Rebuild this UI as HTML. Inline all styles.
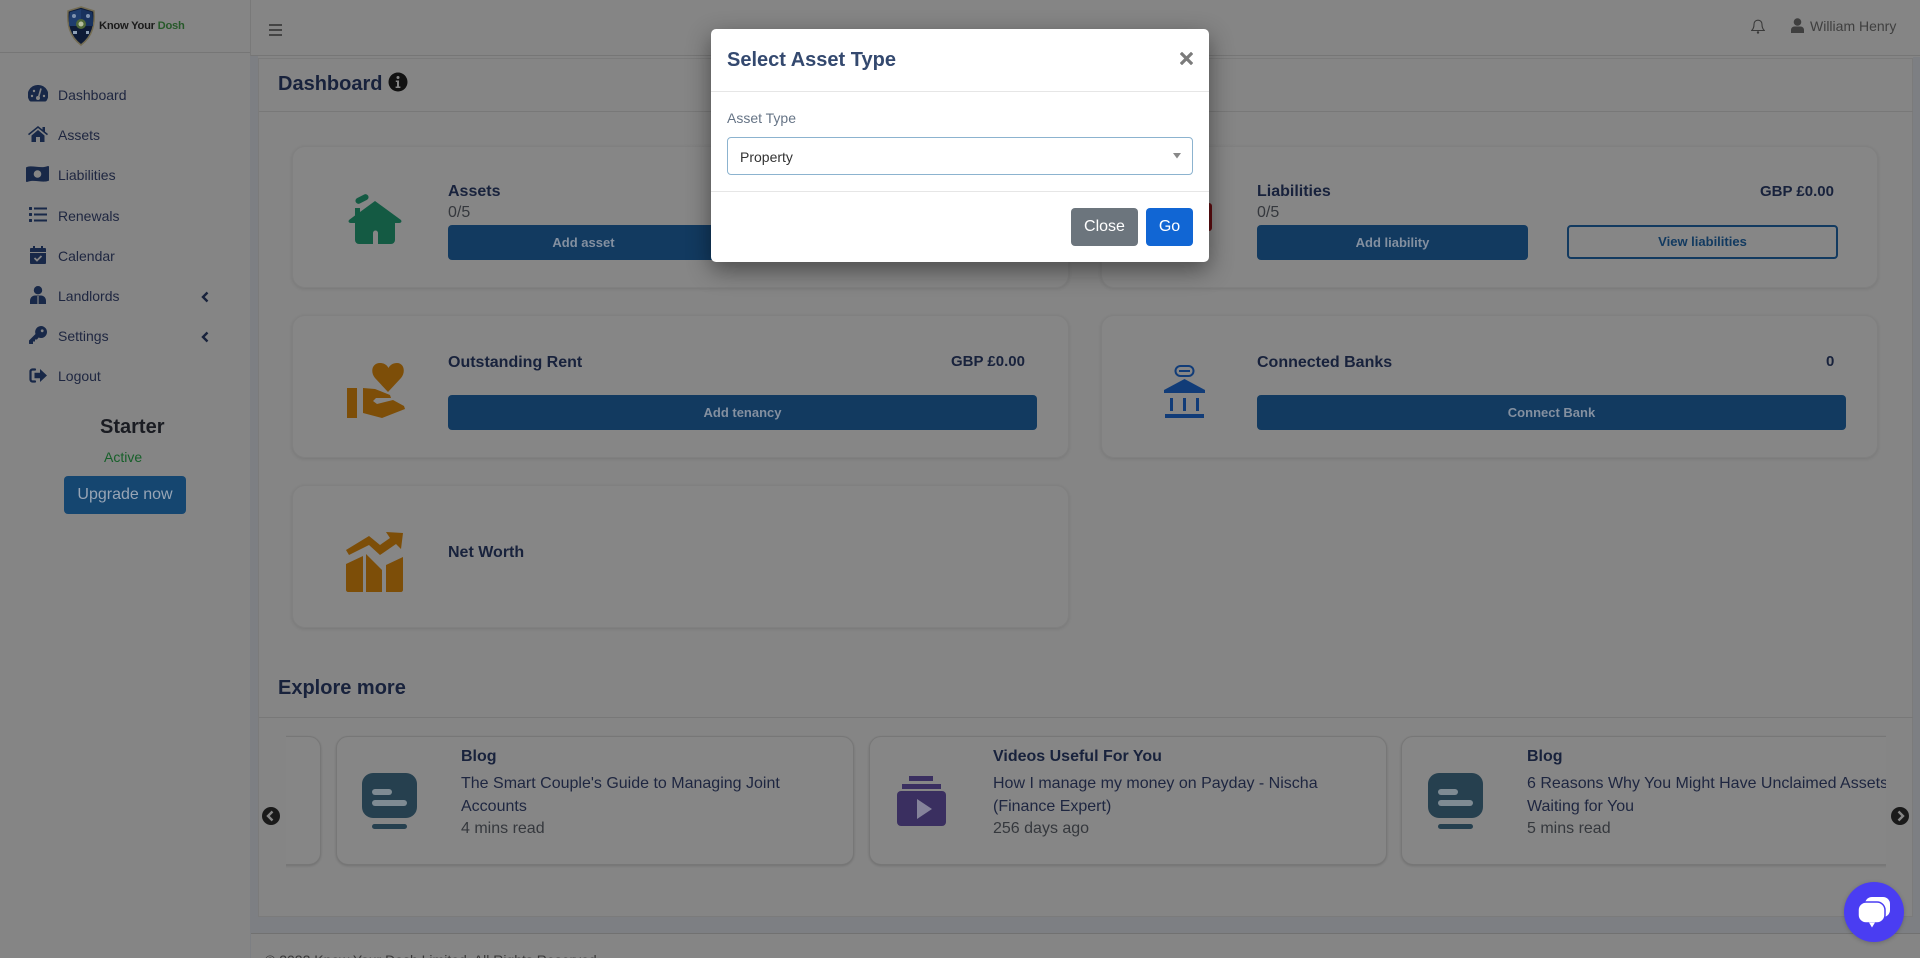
<!DOCTYPE html>
<html lang="en"><head><meta charset="utf-8"><title>Know Your Dosh</title>
<style>
*{box-sizing:border-box}
html,body{margin:0;padding:0;width:1920px;height:958px;overflow:hidden;background:#858585;font-family:"Liberation Sans",sans-serif}
#p{position:relative;width:1920px;height:958px;overflow:hidden;background:#858585}
.a{position:absolute}
.t{position:absolute;white-space:nowrap;line-height:1}
.nav{position:absolute;left:58px;font-size:14px;line-height:16px;color:#1e2640}
.ic{position:absolute}
.card{position:absolute;background:#868686;border:1px solid #808080;border-radius:13px;box-shadow:0 1px 3px rgba(0,0,0,.1)}
.h{position:absolute;font-weight:bold;font-size:16px;line-height:18px;color:#18223c;white-space:nowrap}
.g{position:absolute;font-weight:bold;font-size:15px;line-height:18px;color:#18223c;white-space:nowrap}
.s{position:absolute;font-size:16px;line-height:18px;color:#35383d;white-space:nowrap}
.btn{position:absolute;background:#123a60;border-radius:4px;height:35px;color:#8490a0;font-weight:bold;font-size:13px;line-height:35px;text-align:center}
.c{position:absolute;top:736px;height:129px;background:#868686;border:1px solid #777;border-radius:12px;box-shadow:0 1px 2px rgba(0,0,0,.15)}
.ct{position:absolute;font-size:16px;line-height:18px;color:#1e2640;white-space:nowrap}
</style></head><body><div id="p">

<!-- gutters -->
<div class="a" style="left:250px;top:0;width:8px;height:958px;background:#7d7f83"></div>
<div class="a" style="left:250px;top:0;width:1670px;height:56px;background:#858585;border-bottom:1px solid #767676"></div>
<div class="a" style="left:0;top:52px;width:250px;height:1px;background:#767676"></div>
<div class="a" style="left:250px;top:0;width:1px;height:56px;background:#797979"></div>
<div class="a" style="left:258px;top:58px;width:1655px;height:859px;background:#858585;border:1px solid #7b7b7b"></div>
<div class="a" style="left:1913px;top:57px;width:7px;height:876px;background:#7d7f83"></div>
<div class="a" style="left:258px;top:917px;width:1662px;height:16px;background:#7d7f83"></div>
<div class="a" style="left:251px;top:933px;width:1669px;height:25px;background:#858585;border-top:1px solid #717171"></div>
<div class="a" style="left:259px;top:111px;width:1654px;height:1px;background:#787878"></div>
<div class="a" style="left:259px;top:717px;width:1654px;height:1px;background:#787878"></div>

<!-- logo -->
<svg class="ic" style="left:66px;top:6px" width="30" height="40" viewBox="0 0 30 40">
<path d="M15 1 L28 5 C29 18 27 30 15 39 C3 30 1 18 2 5Z" fill="#0e1b36" stroke="#746c52" stroke-width="1.5"/>
<path d="M4 6 L15 3V20H3C3 14 3 10 4 6Z" fill="#1f3d6d"/><path d="M26 6 L15 3V20H27C27 14 27 10 26 6Z" fill="#18325d"/>
<circle cx="15" cy="18" r="5" fill="#4f6838"/><circle cx="15" cy="18" r="2.500" fill="#b5bea0"/>
<circle cx="8" cy="10" r="2" fill="#7f93ae"/><circle cx="22" cy="10" r="2" fill="#7f93ae"/><rect x="7" y="25" width="4" height="3" fill="#8d9eb3"/><rect x="20" y="25" width="3" height="3" fill="#8d9eb3"/>
</svg>
<div class="t" style="left:99px;top:19px;font-size:11.200px;font-weight:bold;letter-spacing:-.25px;color:#1a1a1a;line-height:14px">Know Your <span style="color:#27592a">Dosh</span></div>

<!-- nav icons -->
<svg class="ic" style="left:28px;top:85px" width="20" height="18" viewBox="0 0 20 18"><path d="M10 0a10 10 0 0 0-8.600 15.600c.4.600 1 .9 1.700.9h13.800c.7 0 1.300-.3 1.700-.9A10 10 0 0 0 10 0z" fill="#182848"/><path d="M10.600 12 13 3.500" stroke="#858585" stroke-width="1.600"/><circle cx="10" cy="13" r="2" fill="#858585"/><circle cx="4" cy="11" r="1.200" fill="#858585"/><circle cx="6" cy="6" r="1.200" fill="#858585"/><circle cx="16" cy="11" r="1.200" fill="#858585"/></svg>
<svg class="ic" style="left:28px;top:126px" width="20" height="16" viewBox="0 0 20 16"><path d="M10 0 L14.500 3.600V1h2.500v4.600L20 8l-1 1.200L10 2 1 9.200 0 8z" fill="#182848"/><path d="M3.500 9.500 10 4l6.500 5.500V16H12v-5H8v5H3.500z" fill="#182848"/></svg>
<svg class="ic" style="left:26px;top:165px" width="23" height="18" viewBox="0 0 23 18"><path d="M1 2C7 0 15 4 22 1c.6 0 1 .3 1 1v13c0 .6-.3 1-1 1-6 2-14-2-21 1-.6 0-1-.3-1-1V3c0-.6.4-1 1-1z" fill="#182848"/><circle cx="11.500" cy="9" r="3.800" fill="#858585"/></svg>
<svg class="ic" style="left:29px;top:207px" width="18" height="15" viewBox="0 0 18 15" fill="#182848"><rect y="0" width="3" height="3" rx=".5"/><rect y="6" width="3" height="3" rx=".5"/><rect y="12" width="3" height="3" rx=".5"/><rect x="5" y="0.500" width="13" height="2"/><rect x="5" y="6.500" width="13" height="2"/><rect x="5" y="12.500" width="13" height="2"/></svg>
<svg class="ic" style="left:30px;top:246px" width="16" height="18" viewBox="0 0 16 18"><path d="M3 0h2v2h6V0h2v2h2c.6 0 1 .4 1 1v3H0V3c0-.6.4-1 1-1h2zM0 7h16v10c0 .6-.4 1-1 1H1c-.6 0-1-.4-1-1z" fill="#182848"/><path d="M4.500 12l2.500 2.500 4.500-4.500" stroke="#858585" stroke-width="1.800" fill="none"/></svg>
<svg class="ic" style="left:30px;top:286px" width="16" height="18" viewBox="0 0 16 18"><circle cx="8" cy="4.200" r="4.200" fill="#182848"/><path d="M0 18v-3c0-3 2-5.500 5-5.500h6c3 0 5 2.500 5 5.500v3z" fill="#182848"/><path d="M8 10v8" stroke="#858585" stroke-width="1.200"/></svg>
<svg class="ic" style="left:29px;top:326px" width="18" height="18" viewBox="0 0 18 18"><path d="M12 0a6 6 0 1 1-2.400 11.500L8 13.500H6v2H4v2.500H.5a.5.500 0 0 1-.5-.5v-3l6.500-6.500A6 6 0 0 1 12 0z" fill="#182848"/><circle cx="13.200" cy="4.800" r="1.400" fill="#858585"/></svg>
<svg class="ic" style="left:29px;top:368px" width="18" height="15" viewBox="0 0 18 15"><path d="M6 1.500H3.500A2 2 0 0 0 1.500 3.500v8a2 2 0 0 0 2 2H6" fill="none" stroke="#182848" stroke-width="2.200" stroke-linecap="round"/><path d="M11 1l7 6.500L11 14v-3.800H5.500V4.800H11z" fill="#182848"/></svg>

<div class="nav" style="top:87px">Dashboard</div>
<div class="nav" style="top:127px">Assets</div>
<div class="nav" style="top:167px">Liabilities</div>
<div class="nav" style="top:208px">Renewals</div>
<div class="nav" style="top:248px">Calendar</div>
<div class="nav" style="top:288px">Landlords</div>
<div class="nav" style="top:328px">Settings</div>
<div class="nav" style="top:368px">Logout</div>
<svg class="ic" style="left:201px;top:291px" width="8" height="12" viewBox="0 0 8 12"><path d="M6.500 1.500 2 6l4.500 4.500" fill="none" stroke="#18223c" stroke-width="2.400"/></svg>
<svg class="ic" style="left:201px;top:331px" width="8" height="12" viewBox="0 0 8 12"><path d="M6.500 1.500 2 6l4.500 4.500" fill="none" stroke="#18223c" stroke-width="2.400"/></svg>

<div class="t" style="left:100px;top:417px;font-size:20px;font-weight:bold;color:#1a1c22;line-height:20px">Starter</div>
<div class="t" style="left:104px;top:449px;font-size:14px;color:#17602a;line-height:16px">Active</div>
<div class="a" style="left:64px;top:476px;width:122px;height:38px;background:#154670;border-radius:4px;color:#98a5b5;font-size:16px;line-height:38px;text-align:center">Upgrade now</div>

<!-- topbar -->
<svg class="ic" style="left:269px;top:24px" width="13" height="12" viewBox="0 0 13 12" fill="#444"><rect width="13" height="2" y="0"/><rect width="13" height="2" y="5"/><rect width="13" height="2" y="10"/></svg>
<svg class="ic" style="left:1751px;top:19px" width="14" height="15" viewBox="0 0 14 15"><path d="M7 1.200c-2.500 0-4 1.800-4 4.300 0 3.500-1 4.800-2.300 6h12.600c-1.300-1.200-2.300-2.500-2.300-6 0-2.500-1.500-4.300-4-4.300z" fill="none" stroke="#3a3a3a" stroke-width="1.100"/><circle cx="7" cy="13.500" r="1.200" fill="#3a3a3a"/></svg>
<svg class="ic" style="left:1791px;top:18px" width="13" height="15" viewBox="0 0 13 15" fill="#3f3f3f"><circle cx="6.500" cy="4" r="3.800"/><path d="M0 15v-3c0-2 1.500-3.500 3.500-3.500h6c2 0 3.500 1.500 3.500 3.500v3z"/></svg>
<div class="t" style="left:1810px;top:18px;font-size:14px;color:#3f3f3f;line-height:16px">William Henry</div>

<!-- headings -->
<div class="t" style="left:278px;top:73px;font-size:20px;font-weight:bold;color:#18223c;line-height:22px">Dashboard</div>
<svg class="ic" style="left:388px;top:72px" width="20" height="20" viewBox="0 0 20 20"><circle cx="10" cy="10" r="9.500" fill="#121212"/><circle cx="10" cy="5.500" r="1.500" fill="#858585"/><path d="M7.800 8.500h3.200v6h1.400v1.500H7.600v-1.500H9v-4.500H7.800z" fill="#858585"/></svg>
<div class="t" style="left:278px;top:677px;font-size:20px;font-weight:bold;color:#18223c;line-height:23px">Explore more</div>

<!-- cards -->
<div class="card" style="left:292px;top:146px;width:777px;height:142px"></div>
<div class="card" style="left:1101px;top:146px;width:777px;height:142px"></div>
<div class="card" style="left:292px;top:315px;width:777px;height:143px"></div>
<div class="card" style="left:1101px;top:315px;width:777px;height:143px"></div>
<div class="card" style="left:292px;top:485px;width:777px;height:143px"></div>

<!-- house -->
<svg class="ic" style="left:348px;top:193px" width="55" height="53" viewBox="0 0 55 53" fill="#145a43">
<rect x="7" y="3" width="14" height="6" rx="3" transform="rotate(-27 14 6)"/>
<path d="M27 8 53 27Q54.500 29.500 51 30H47V47a4 4 0 0 1-4 4H30V40a2.500 2.500 0 0 0-5 0V51H11a4 4 0 0 1-4-4V30H3Q-.5 29.500 1 27L7 22.500V15h5v4z"/></svg>
<!-- red liabilities fragment -->
<div class="a" style="left:1195px;top:203px;width:17px;height:28px;background:#5f0d11;border-radius:3px"></div>
<!-- hand heart -->
<svg class="ic" style="left:346px;top:362px" width="60" height="58" viewBox="0 0 60 58" fill="#7d4e08">
<path d="M42 30 29 16C24 10 26 1 34 1 38 1 41 3 42.500 6 44 3 47 1 51 1 58 1 60 10 55 16Z"/>
<rect x="1" y="26" width="10" height="30"/>
<path d="M17 26 29 27 44 33 45 36 30 36 27 39 31 42 47 38 58 44 59 47 36 56 17 51Z"/></svg>
<!-- bank -->
<svg class="ic" style="left:1164px;top:365px" width="41" height="54" viewBox="0 0 41 54" fill="#113c78">
<rect x="11.500" y="1" width="18" height="10" rx="5" fill="none" stroke="#113c78" stroke-width="2"/><rect x="15" y="5" width="11" height="2"/>
<path d="M20.500 14 41 25v3H0v-3z"/><rect x="6" y="33" width="3" height="13"/><rect x="19" y="33" width="3" height="13"/><rect x="32" y="33" width="3" height="13"/><rect x="1" y="49" width="39" height="4"/></svg>
<!-- net worth -->
<svg class="ic" style="left:346px;top:532px" width="58" height="61" viewBox="0 0 58 61" fill="#7d4e08">
<path d="M0 18 23 4 34 13 44 6 40 0 57 1 55 17 50 12 34 23 23 13 3 23z"/>
<path d="M0 32 17 24V60H2c-1 0-2-1-2-2z"/><path d="M20 22 36 38V60H20z"/><path d="M40 33 57 25V58c0 1-1 2-2 2H40z"/></svg>

<!-- card text -->
<div class="h" style="left:448px;top:183px">Assets</div>
<div class="s" style="left:448px;top:204px">0/5</div>
<div class="btn" style="left:448px;top:225px;width:271px">Add asset</div>
<div class="h" style="left:1257px;top:183px">Liabilities</div>
<div class="s" style="left:1257px;top:204px">0/5</div>
<div class="g" style="left:1760px;top:183px">GBP £0.00</div>
<div class="btn" style="left:1257px;top:225px;width:271px">Add liability</div>
<div class="a" style="left:1567px;top:225px;width:271px;height:34px;border:2px solid #123a60;border-radius:4px;color:#123a60;font-weight:bold;font-size:13px;line-height:30px;text-align:center">View liabilities</div>
<div class="h" style="left:448px;top:354px">Outstanding Rent</div>
<div class="g" style="left:951px;top:353px">GBP £0.00</div>
<div class="btn" style="left:448px;top:395px;width:589px">Add tenancy</div>
<div class="h" style="left:1257px;top:354px">Connected Banks</div>
<div class="g" style="left:1826px;top:353px">0</div>
<div class="btn" style="left:1257px;top:395px;width:589px">Connect Bank</div>
<div class="h" style="left:448px;top:544px">Net Worth</div>

<!-- carousel -->
<div class="a" style="left:286px;top:730px;width:1600px;height:145px;overflow:hidden">
  <div class="c" style="left:-300px;top:6px;width:335px"></div>
  <div class="c" style="left:50px;top:6px;width:518px"></div>
  <div class="c" style="left:583px;top:6px;width:518px"></div>
  <div class="c" style="left:1115px;top:6px;width:518px"></div>
  <svg class="ic" style="left:76px;top:43px" width="55" height="56" viewBox="0 0 55 56"><rect width="55" height="45" rx="11" fill="#26404f"/><rect x="10" y="16" width="20" height="6" rx="3" fill="#7f8b93"/><rect x="10" y="27" width="35" height="6" rx="3" fill="#7f8b93"/><rect x="10" y="51" width="35" height="5" rx="2.500" fill="#26404f"/></svg>
  <div class="h" style="left:175px;top:18px">Blog</div>
  <div class="ct" style="left:175px;top:45px">The Smart Couple's Guide to Managing Joint</div>
  <div class="ct" style="left:175px;top:68px">Accounts</div>
  <div class="s" style="left:175px;top:90px">4 mins read</div>

  <svg class="ic" style="left:611px;top:46px" width="49" height="50" viewBox="0 0 49 50" fill="#3a2f60"><rect x="12" y="0" width="24" height="5"/><rect x="5" y="8" width="39" height="5"/><rect x="0" y="15" width="49" height="35" rx="4"/><path d="M20 23 35 33 20 43z" fill="#85839a"/></svg>
  <div class="h" style="left:707px;top:18px">Videos Useful For You</div>
  <div class="ct" style="left:707px;top:45px">How I manage my money on Payday - Nischa</div>
  <div class="ct" style="left:707px;top:68px">(Finance Expert)</div>
  <div class="s" style="left:707px;top:90px">256 days ago</div>

  <svg class="ic" style="left:1142px;top:43px" width="55" height="56" viewBox="0 0 55 56"><rect width="55" height="45" rx="11" fill="#26404f"/><rect x="10" y="16" width="20" height="6" rx="3" fill="#7f8b93"/><rect x="10" y="27" width="35" height="6" rx="3" fill="#7f8b93"/><rect x="10" y="51" width="35" height="5" rx="2.500" fill="#26404f"/></svg>
  <div class="h" style="left:1241px;top:18px">Blog</div>
  <div class="ct" style="left:1241px;top:45px">6 Reasons Why You Might Have Unclaimed Assets</div>
  <div class="ct" style="left:1241px;top:68px">Waiting for You</div>
  <div class="s" style="left:1241px;top:90px">5 mins read</div>
</div>
<svg class="ic" style="left:262px;top:807px" width="18" height="18" viewBox="0 0 18 18"><circle cx="9" cy="9" r="9" fill="#1a1a1a"/><path d="M10.500 4.500 6 9l4.500 4.500" fill="none" stroke="#858585" stroke-width="2.400"/></svg>
<svg class="ic" style="left:1891px;top:807px" width="18" height="18" viewBox="0 0 18 18"><circle cx="9" cy="9" r="9" fill="#1a1a1a"/><path d="M7.500 4.500 12 9l-4.500 4.500" fill="none" stroke="#858585" stroke-width="2.400"/></svg>

<!-- footer -->
<div class="t" style="left:265px;top:952px;font-size:14px;color:#383838;line-height:16px">© 2022 Know Your Dosh Limited. All Rights Reserved.</div>

<!-- chat -->
<div class="a" style="left:1844px;top:882px;width:60px;height:60px;border-radius:50%;background:#4a3df2;box-shadow:0 1px 4px rgba(0,0,0,.2)"></div>
<svg class="ic" style="left:1857px;top:895px" width="34" height="34" viewBox="0 0 34 34"><rect x="8" y="2" width="25" height="20" rx="7" fill="#fff"/><rect x="1" y="7" width="27" height="21" rx="8" fill="#fff" stroke="#4a3df2" stroke-width="1.500"/><path d="M12 27.500 15 32.500 18 27.500z" fill="#fff"/></svg>

<!-- modal -->
<div class="a" style="left:711px;top:29px;width:498px;height:233px;background:#fff;border-radius:5px;box-shadow:0 8px 24px rgba(0,0,0,.45)"></div>
<div class="a" style="left:711px;top:91px;width:498px;height:1px;background:#e6e6e6"></div>
<div class="a" style="left:711px;top:191px;width:498px;height:1px;background:#e6e6e6"></div>
<div class="t" style="left:727px;top:49px;font-size:20px;font-weight:bold;color:#34496f;line-height:23px">Select Asset Type</div>
<svg class="ic" style="left:1180px;top:52px" width="13" height="13" viewBox="0 0 13 13"><path d="M2 2l9 9M11 2l-9 9" stroke="#7b7b7b" stroke-width="3.200" stroke-linecap="square"/></svg>
<div class="t" style="left:727px;top:110px;font-size:14px;color:#667486;line-height:16px">Asset Type</div>
<div class="a" style="left:727px;top:137px;width:466px;height:38px;border:1px solid #8cb3cf;border-radius:4px;background:#fff"></div>
<div class="t" style="left:740px;top:149px;font-size:14px;color:#333;line-height:16px">Property</div>
<svg class="ic" style="left:1172px;top:153px" width="10" height="6" viewBox="0 0 10 6"><path d="M1 0h8L5 5.500z" fill="#888"/></svg>
<div class="a" style="left:1071px;top:208px;width:67px;height:38px;background:#6c757d;border-radius:4px;color:#fff;font-size:16px;line-height:38px;text-align:center">Close</div>
<div class="a" style="left:1146px;top:208px;width:47px;height:38px;background:#1166d4;border-radius:4px;color:#fff;font-size:16px;line-height:38px;text-align:center">Go</div>

</div></body></html>
